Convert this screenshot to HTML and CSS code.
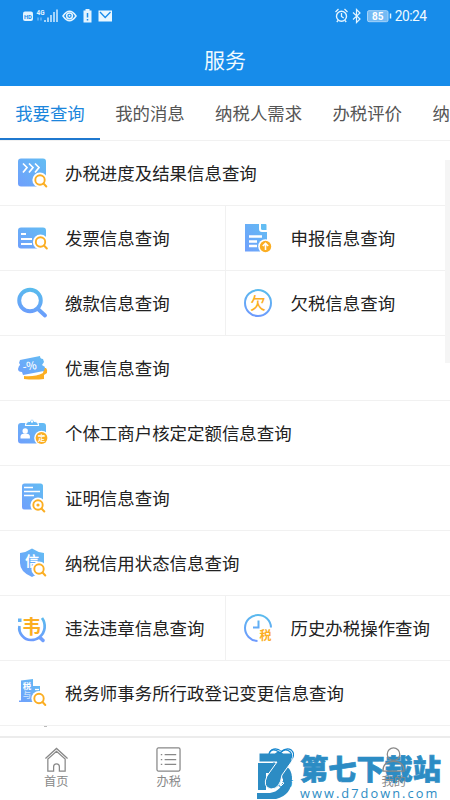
FILE: index.html
```html
<!DOCTYPE html>
<html lang="zh-CN">
<head>
<meta charset="utf-8">
<title>服务</title>
<link rel="stylesheet" href="styles.css">
</head>
<body>
<svg class="defs" aria-hidden="true">
  <defs>
    <linearGradient id="g" x1="1" y1="0" x2="0" y2="1"><stop offset="0" stop-color="#63bdf3"/><stop offset="1" stop-color="#6f9ffc"/></linearGradient>
    <linearGradient id="gs" gradientUnits="userSpaceOnUse" x1="20" y1="1" x2="14" y2="32"><stop offset="0" stop-color="#58bdec"/><stop offset="1" stop-color="#6f97ff"/></linearGradient>
    <g id="mag"><circle cx="23" cy="22" r="7.600" fill="#fff"/><path d="M26 25l4 4" stroke="#fff" stroke-width="4.500"/><circle cx="23" cy="22" r="4.700" fill="#fff" stroke="#fbae23" stroke-width="1.900"/><path d="M26.500 25.500l2.800 3" stroke="#fbae23" stroke-width="2" stroke-linecap="round"/></g>
  </defs>
</svg>
<div class="app">
  <header class="header">
    <div class="status">
      <svg class="status-left" viewBox="0 0 92 16" width="92" height="16">
        <rect x="0" y="3.500" width="10" height="9.500" rx="2" fill="#e3f4ff"/>
        <text x="1" y="10.500" font-size="5.800" font-weight="700" fill="#198ceb">HD</text>
        <text x="13.500" y="7" font-size="7" font-weight="700" fill="#e3f4ff" textLength="8" lengthAdjust="spacingAndGlyphs">4G</text>
        <path d="M15 9.500v3M18 9.500v3" stroke="#75bbf4" stroke-width="1.300"/>
        <path d="M22 14v-2M25 14V9.500M28 14V7M31 14V4M34 14V1.500" stroke="#d4ecff" stroke-width="1.500"/>
        <path d="M40 8Q46.500-1.500 53 8Q46.500 17.500 40 8Z" fill="none" stroke="#e3f4ff" stroke-width="1.500"/>
        <circle cx="46.500" cy="7.800" r="2.900" fill="none" stroke="#e3f4ff" stroke-width="1.500"/><circle cx="46.500" cy="7.800" r="1" fill="#e3f4ff"/>
        <path d="M62.500 1h4v1.500h2V14.500h-8V2.500h2z" fill="#e3f4ff"/><path d="M64.500 5v4.500M64.500 11v1.500" stroke="#198ceb" stroke-width="1.500"/>
        <rect x="75.500" y="2.500" width="13.500" height="11" fill="#e9f7ff"/><path d="M77 4l5.200 5.500L87.500 4" fill="none" stroke="#198ceb" stroke-width="1.300"/>
      </svg>
      <div class="status-right">
        <svg viewBox="0 0 57 16" width="57" height="16" fill="none" stroke="#e3f4ff">
          <circle cx="6.500" cy="8.200" r="5" stroke-width="1.400"/><path d="M6.500 5v3.500L8.700 10M.500 4l3-3M9.500 1l3 3M3 12.500L1.800 14M10 12.500l1.200 1.500" stroke-width="1.300"/>
          <path d="M18 4.500l7 6.500-3.500 3.500V1.500L25 5l-7 6.500" stroke-width="1.200"/>
          <rect x="32.500" y="2.700" width="20.500" height="11" rx="1.500" fill="#74baf4" stroke="#a5d3f9"/><path d="M55.500 5.500v5" stroke-width="1.500"/>
          <text x="37" y="11.600" font-size="10" font-weight="700" fill="#fff" stroke="none">85</text>
        </svg>
        <span class="clock">20:24</span>
      </div>
    </div>
    <h1 class="title">服务</h1>
  </header>
  <nav class="tabs">
    <a class="tab active">我要查询</a><a class="tab">我的消息</a><a class="tab">纳税人需求</a><a class="tab">办税评价</a><a class="tab">纳</a>
  </nav>
  <main class="list">
    <div class="row"><div class="cell">
      <svg class="icon" viewBox="0 0 32 32"><rect x="2" y="1.500" width="28" height="28" rx="3" fill="url(#g)"/><path d="M7 6.500l4 4-4 5M13 6.500l4 4-4 5M19 6.500l4 4-4 5" fill="none" stroke="#fff" stroke-width="1.700"/><use href="#mag" x="1" y="1"/></svg>
      <span>办税进度及结果信息查询</span></div></div>
    <div class="row"><div class="cell">
      <svg class="icon" viewBox="0 0 32 32"><rect x="2" y="5.500" width="28" height="21" rx="3" fill="url(#g)"/><path d="M5 12h5M5 17h11M5 22h11" stroke="#fff" stroke-width="1.800"/><use href="#mag" x="1.500" y="-2"/></svg>
      <span>发票信息查询</span></div><div class="cell">
      <svg class="icon" viewBox="0 0 32 32"><path d="M3 2h14v5q0 3 3 3h5V28.500a1 1 0 0 1-1 1H3z" fill="url(#g)"/><path d="M19 2h4.500a1 1 0 0 1 1 1v5h-4q-1.500 0-1.500-1.500z" fill="#63bdf3"/><path d="M7 14.500h13M7 19.500h8M7 24h8" stroke="#fff" stroke-width="2.300"/><circle cx="23.500" cy="24.500" r="7.300" fill="#fff"/><circle cx="23.500" cy="24.500" r="5.700" fill="#fbae23"/><path d="M23.500 28v-6M20.800 24l2.700-2.700 2.700 2.700" fill="none" stroke="#fff" stroke-width="1.600"/></svg>
      <span>申报信息查询</span></div></div>
    <div class="row"><div class="cell">
      <svg class="icon" viewBox="0 0 32 32" fill="none" stroke="url(#gs)" stroke-width="3.900" stroke-linecap="round"><circle cx="14" cy="13.500" r="10.800"/><path d="M22.500 22.500l6.500 6"/></svg>
      <span>缴款信息查询</span></div><div class="cell">
      <svg class="icon" viewBox="0 0 32 32"><circle cx="16" cy="16" r="13" fill="none" stroke="url(#gs)" stroke-width="2"/><text class="glyph gold medium" x="8.200" y="21.700" font-size="15.500">欠</text></svg>
      <span>欠税信息查询</span></div></div>
    <div class="row"><div class="cell">
      <svg class="icon" viewBox="0 0 32 32"><path d="M8 24q11 1 19-3l1-5h2q2 2 1 5l-3 2v4q-10 1-20 0z" fill="#fbae23"/><path d="M4 8L24 4q0 3 3 3l1 3-2 3 3 2-1 4L7 23l-1-3q-4 0-4-3l1-3q2-1 0-3z" fill="url(#g)"/><text x="6.500" y="17.800" font-size="11" font-weight="500" fill="#fff" transform="rotate(-7 15 15)">-%</text></svg>
      <span>优惠信息查询</span></div></div>
    <div class="row"><div class="cell">
      <svg class="icon" viewBox="0 0 32 32"><rect x="2" y="6" width="28" height="20.500" rx="3" fill="url(#g)"/><path d="M9.500 8.500q0-4 4-4 2.500-5 5 0 4 0 4 4z" fill="#67b8f5" stroke="#fff" stroke-width="1.200"/><path d="M11 7.500q.500-2 3-2 2-4.500 4 0 2.500 0 3 2z" fill="#67b8f5"/><circle cx="16" cy="4.500" r="1.200" fill="#fff"/><circle cx="9.200" cy="14" r="2.700" fill="#fff"/><path d="M4.500 21.500v-2q0-3 4.700-3t4.700 3v2z" fill="#fff"/><circle cx="25.500" cy="21" r="7.300" fill="#fff"/><circle cx="25.500" cy="21" r="5.900" fill="#fbae23"/><text class="glyph light medium" x="21.700" y="23.800" font-size="7.500">定</text></svg>
      <span>个体工商户核定定额信息查询</span></div></div>
    <div class="row"><div class="cell">
      <svg class="icon" viewBox="0 0 32 32"><rect x="6" y="1.500" width="21" height="26" rx="2.500" fill="url(#g)"/><path d="M8 5.500h9M8 9.500h16M8 13.500h10" stroke="#fff" stroke-width="1.700"/><use href="#mag" x="-1" y="1"/><circle cx="22" cy="23" r="1.600" fill="#fbae23"/></svg>
      <span>证明信息查询</span></div></div>
    <div class="row"><div class="cell">
      <svg class="icon" viewBox="0 0 32 32"><path d="M16 1.500q6 4 12 4.500v10q0 9-12 14Q4 25 4 16V6q6-.500 12-4.500z" fill="url(#g)"/><text class="glyph light" x="9" y="18.500" font-size="14">信</text><use href="#mag"/></svg>
      <span>纳税信用状态信息查询</span></div></div>
    <div class="row"><div class="cell">
      <svg class="icon" viewBox="0 0 32 32"><path d="M3.500 14C2 21 8 28 15 28q5 0 8-2.500c7-5 7-14 3-19.500" fill="none" stroke="url(#gs)" stroke-width="2.700"/><rect x="2" y="6.500" width="3.500" height="3.500" fill="#66b4f5"/><path d="M24.500 26l2.500 2.500" stroke="#6f9ffc" stroke-width="3.500" stroke-linecap="round"/><text class="glyph gold" x="6" y="22" font-size="19">韦</text></svg>
      <span>违法违章信息查询</span></div><div class="cell">
      <svg class="icon" viewBox="0 0 32 32"><path d="M15.500 29A13 13 0 1 1 29 15.500M16.500 8.500v7H11" fill="none" stroke="url(#gs)" stroke-width="2"/><text class="glyph gold" x="17.500" y="27.500" font-size="12">税</text></svg>
      <span>历史办税操作查询</span></div></div>
    <div class="row"><div class="cell">
      <svg class="icon" viewBox="0 0 32 32"><path d="M5 3.500L17 2v7h7v16H3v-1.500h2z" fill="url(#g)"/><text class="glyph light" x="6.700" y="11.500" font-size="8.500">税</text><text class="glyph light" x="7" y="21" font-size="8" opacity=".6">与</text><path d="M19 12.500h4" stroke="#fff" stroke-width="1.300"/><use href="#mag" y="-.5"/></svg>
      <span>税务师事务所行政登记变更信息查询</span></div></div>
    <div class="row next"><i class="peek"></i></div>
    <i class="scrollbar"></i>
  </main>
  <footer class="bottom">
    <a class="nav-item"><svg class="nav-icon" viewBox="0 0 26 26"><path d="M1.500 12L13 1.500 24.500 12M4 12.500V25h6v-4.500a3 3 0 0 1 6 0V25h6V12.500L13 4.500z"/></svg>首页</a>
    <a class="nav-item"><svg class="nav-icon" viewBox="0 0 26 26"><rect x="1" y="1" width="24" height="24" rx="1.500"/><path d="M9 8h12M9 13h12M9 18h12M5 8h1.500M5 13h1.500M5 18h1.500"/></svg>办税</a>
    <a class="nav-item current"><svg class="nav-icon" viewBox="0 0 26 26"><path d="M13 24L3 14Q-2 7 3 3q5-3 10 2 5-5 10-2 5 4 0 11z"/></svg>服务</a>
    <a class="nav-item over"><svg class="nav-icon" viewBox="0 0 26 26"><circle cx="13" cy="7.500" r="6.500"/><path d="M2 25q0-10 11-10t11 10z"/></svg>我的</a>
    <div class="watermark">
      <svg class="mark" viewBox="0 0 38 50" width="38" height="50"><path d="M1 14h14q20 0 20 15 0 20-22 22H0v-7h13q12-2 13-14l-3-6H9v17H1z" fill="#2c8cc4"/><path d="M2 4h16q4-4 8 0h9v8L25 26q-2 14-11 14-9-2-4-13l10-14H2z" fill="#2c8cc4" stroke="#fff" stroke-width="1"/><path d="M12 5q1-5 6-4 3 1 5 3 3-4 7-3 6 2 4 8" fill="none" stroke="#1787cf" stroke-width="1.300"/><path d="M24 30l2 1-2 2 3 1-3 3" fill="none" stroke="#fff"/></svg>
      <div class="mark-text"><b>第七下载站</b><span>www.d7down.com</span></div>
    </div>
  </footer>
</div>
</body>
</html>
```

FILE: styles.css
```css
* { box-sizing: border-box; }
body { margin: 0; background: #fff; font-family: "Noto Sans CJK SC", sans-serif; }
.defs { position: absolute; width: 0; height: 0; }
.app { display: flex; flex-direction: column; width: 450px; height: 800px; overflow: hidden; }
.header { flex: none; height: 86px; background: #178cea; color: #effaff; }
.status { display: flex; justify-content: space-between; height: 32px; padding: 8px 23.500px 0 23px; font-family: Roboto, sans-serif; }
.status-right { display: flex; gap: 3px; }
.clock { font-size: 13.800px; line-height: 17px; letter-spacing: -.5px; }
.title { margin: 11px 0 0; font-size: 21px; line-height: 32px; font-weight: 400; text-align: center; }
.tabs { flex: none; display: flex; height: 54px; overflow: hidden; }
.tab { flex: none; padding: 0 15.200px; height: 54px; font-size: 17.400px; line-height: 54px; color: #555; white-space: nowrap; }
.tab.active { color: #1c86dc; border-bottom: 2px solid #1f78cf; }
.list { flex: none; position: relative; height: 596px; overflow: hidden; }
.row { display: flex; height: 65px; border-top: 1px solid #f1f1f1; }
.cell { flex: 1; display: flex; align-items: center; padding-left: 16px; gap: 17px; font-size: 17.450px; line-height: 26px; color: #222; white-space: nowrap; }
.cell + .cell { border-left: 1px solid #f1f1f1; }
.icon { flex: none; width: 32px; height: 32px; }
.glyph { font-family: "Noto Sans CJK SC", sans-serif; font-weight: 700; }
.medium { font-weight: 500; }
.gold { fill: #fbae23; }
.light { fill: #fff; }
.peek { width: 3px; height: 1px; margin-left: 44px; background: #bbb; }
.scrollbar { position: absolute; right: 0; top: 20px; width: 5px; height: 203px; background: #f5f5f5; }
.bottom { flex: none; position: relative; display: flex; height: 64px; border-top: 2px solid #ececec; background: #fff; }
.nav-item { flex: 1; display: flex; flex-direction: column; align-items: center; padding-top: 9px; font-size: 12.200px; line-height: 18px; color: #888; }
.nav-icon { width: 25px; height: 25px; fill: none; stroke: #888; stroke-width: 1.300; }
.current { color: #1787cf; }
.current .nav-icon { stroke: #1787cf; }
.over { position: relative; z-index: 2; }
.watermark { position: absolute; left: 257px; top: 10px; display: flex; gap: 5px; color: #2c8cc4; }
.mark { margin-top: 1px; }
.mark-text { display: flex; flex-direction: column; padding-top: 3px; white-space: nowrap; }
.mark-text b { font-size: 28.200px; line-height: 34px; font-weight: 900; -webkit-text-stroke: .7px #2c8cc4; }
.mark-text span { font-family: "Open Sans", sans-serif; font-size: 12.800px; font-weight: 500; line-height: 16px; letter-spacing: 2.050px; }
```
